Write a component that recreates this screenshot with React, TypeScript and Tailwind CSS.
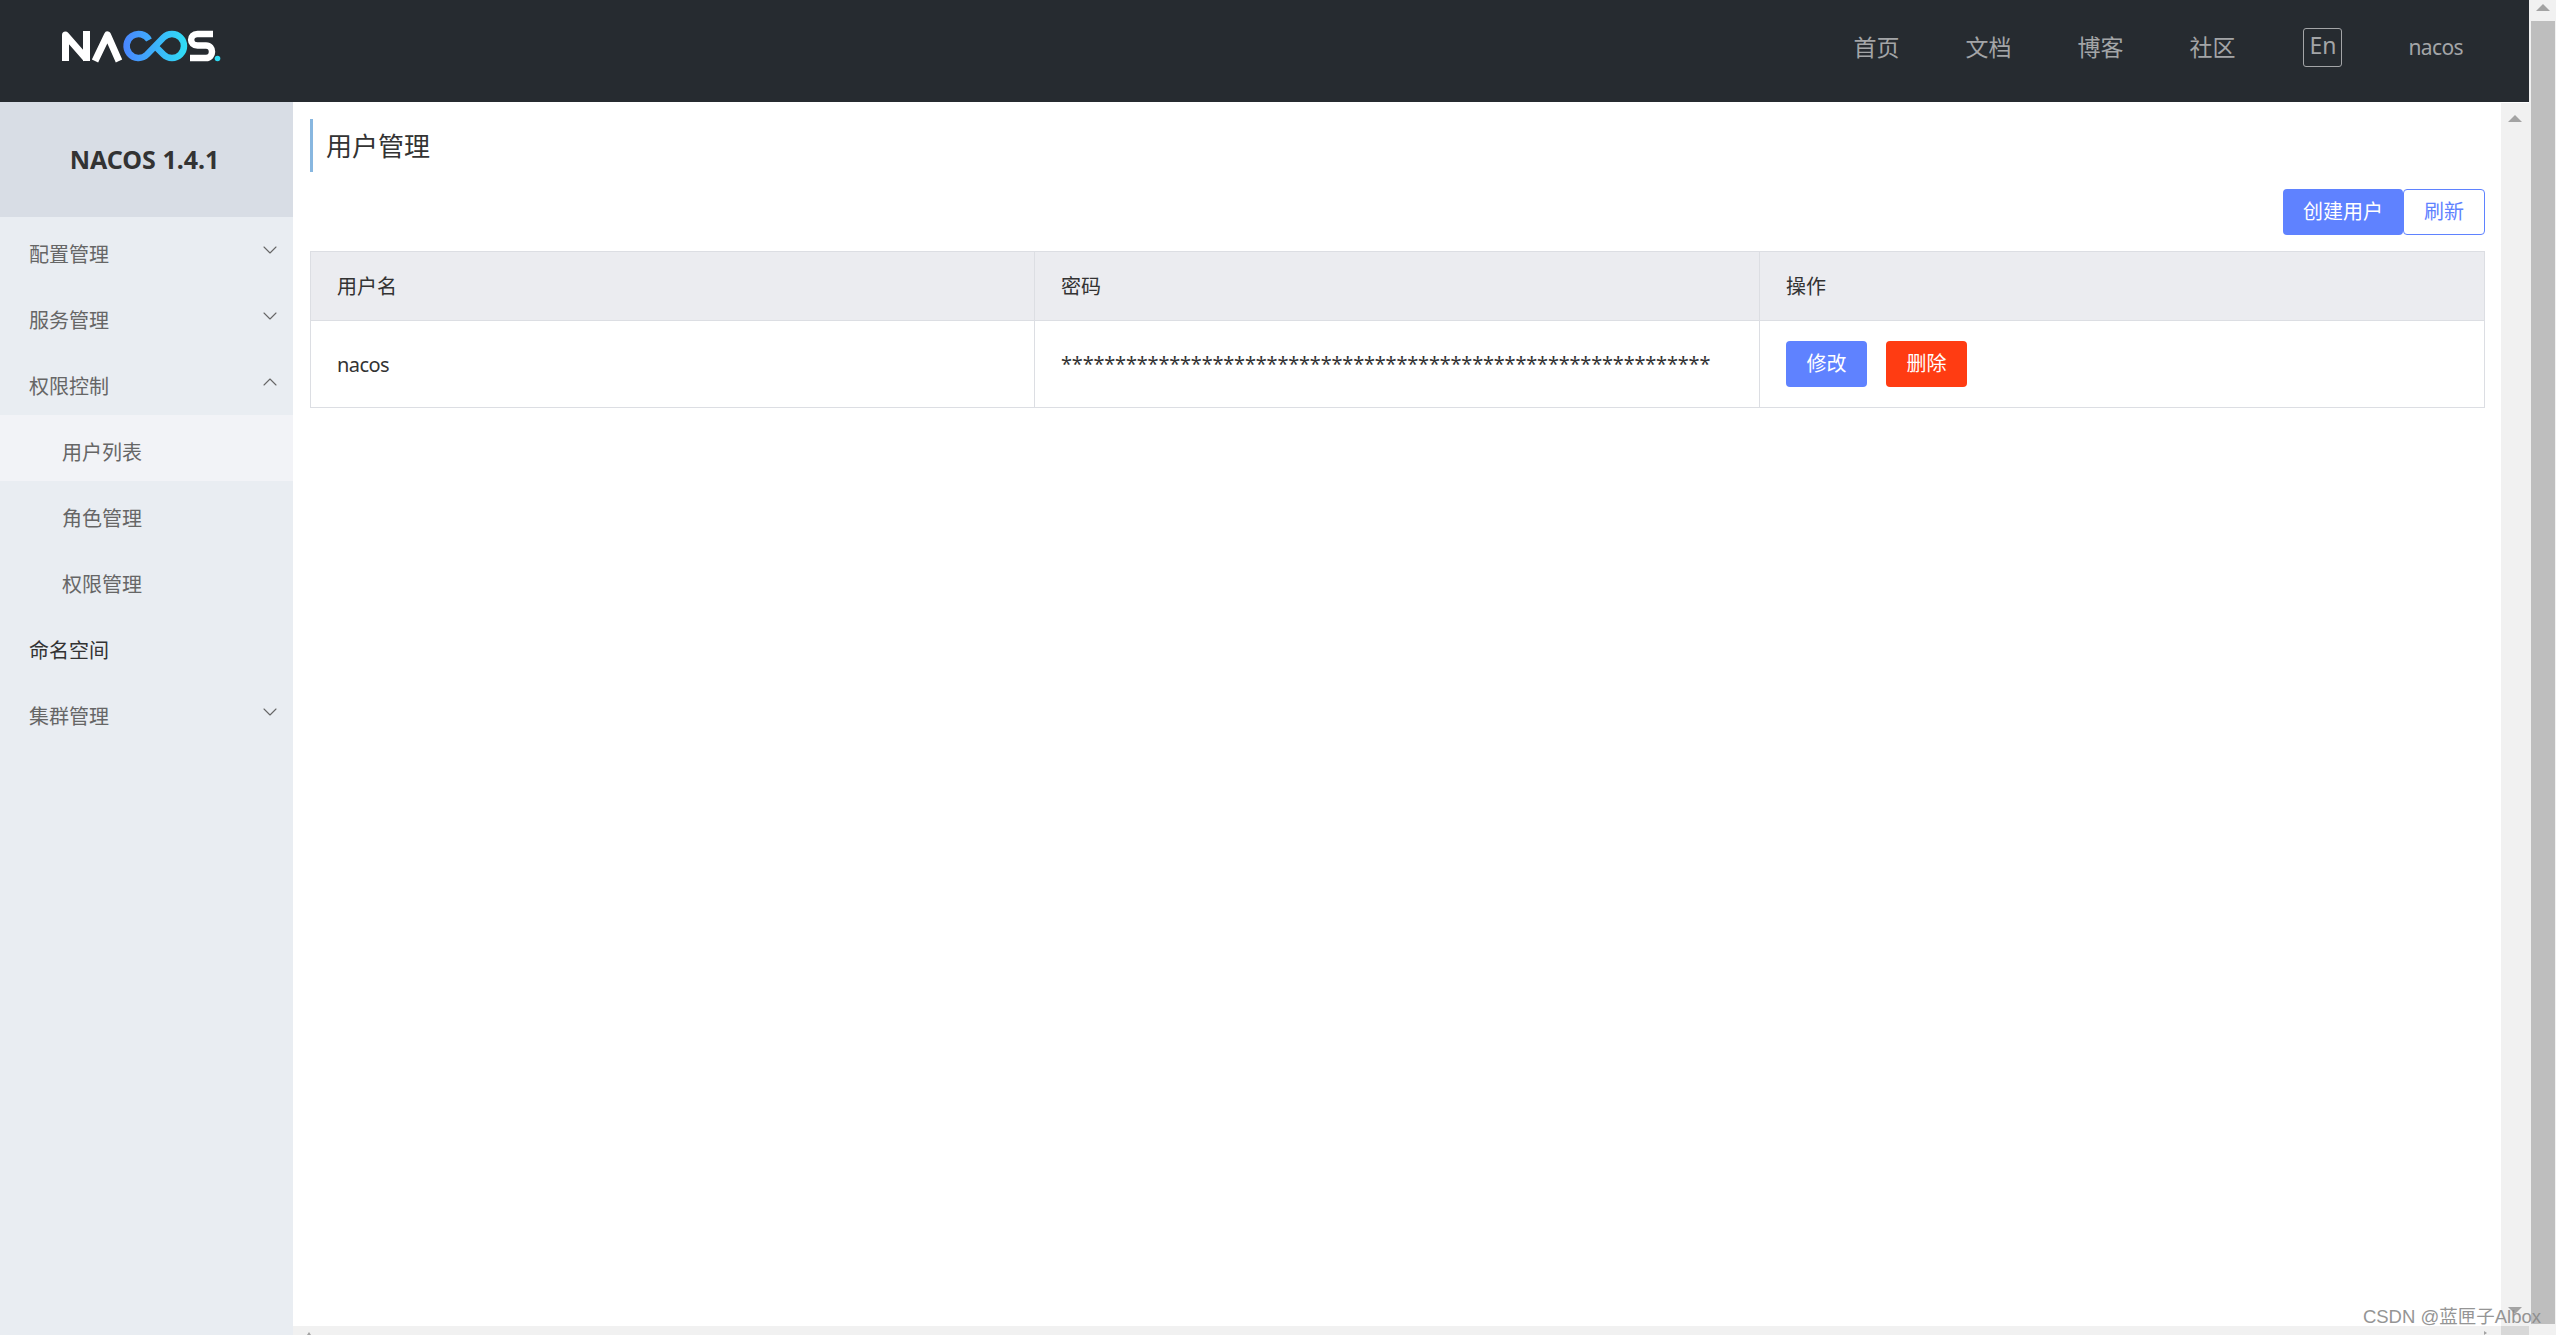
import { ChevronDown, ChevronUp } from 'lucide-react'

const font = { fontFamily: '"Noto Sans", "Noto Sans CJK SC", sans-serif' }

function Logo() {
  return (
    <svg width="170" height="40" viewBox="60 25 170 40" fill="none" className="block">
      <defs>
        <linearGradient id="inf" x1="123" y1="0" x2="188" y2="0" gradientUnits="userSpaceOnUse">
          <stop offset="0" stopColor="#4a85ff" />
          <stop offset="1" stopColor="#2fe0f5" />
        </linearGradient>
      </defs>
      <path d="M65.5 60V34L86.5 58" stroke="#fff" strokeWidth="7" strokeLinejoin="round" />
      <path d="M86.5 60V30" stroke="#fff" strokeWidth="7" />
      <path d="M95 60L107.5 34L119 60" stroke="#fff" strokeWidth="7" strokeLinejoin="round" />
      <path
        d="M149 39A12 12 0 1 0 147 53.5L163.5 36.5A12 12 0 1 1 163.5 53.5L157 47"
        stroke="url(#inf)"
        strokeWidth="6.5"
      />
      <path
        d="M213 33H197.5C189 33 189 44.5 197.5 44.5H206C214 44.5 214 57 206 57H190"
        stroke="#fff"
        strokeWidth="6.5"
      />
      <circle cx="217.5" cy="57.5" r="2.8" fill="#30dcf5" />
    </svg>
  )
}

function MenuItem({
  title,
  open,
  sub,
  active,
  dark,
  arrow,
}: {
  title: string
  open?: boolean
  sub?: boolean
  active?: boolean
  dark?: boolean
  arrow?: boolean
}) {
  return (
    <div
      className={`relative flex h-[66px] items-center pt-[10px] text-[20px] ${sub ? 'pl-[62px]' : 'pl-[29px]'} ${
        active ? 'bg-[#f2f3f7]' : ''
      } ${dark ? 'text-[#333333]' : 'text-[#666666]'}`}
    >
      {title}
      {arrow && (
        <span className="absolute right-[11px] top-[21px] text-[#666666]">
          {open ? <ChevronUp size={24} strokeWidth={1.1} /> : <ChevronDown size={24} strokeWidth={1.1} />}
        </span>
      )}
    </div>
  )
}

function UpArrow() {
  return <div className="h-0 w-0 border-x-[7px] border-b-[7px] border-x-transparent border-b-[#a3a3a3]" />
}

function DownArrow() {
  return <div className="h-0 w-0 border-x-[7px] border-t-[7px] border-x-transparent border-t-[#a3a3a3]" />
}

export default function App() {
  return (
    <div className="relative flex h-screen w-full overflow-hidden bg-white text-[#333333]" style={font}>
      <div className="flex h-full w-[2529px] flex-col">
        <header className="flex h-[102px] shrink-0 items-center justify-between bg-[#262b30] pl-[60px] pr-[66px] text-[#a3a5a7]">
          <div className="-mt-[10px]">
            <Logo />
          </div>
          <nav className="-mt-[8px] flex items-center text-[23px]">
            <span className="mr-[66px]">首页</span>
            <span className="mr-[66px]">文档</span>
            <span className="mr-[66px]">博客</span>
            <span className="mr-[68px]">社区</span>
            <span className="mr-[66px] flex h-[39px] w-[39px] items-start justify-center rounded-[3px] border border-[#a3a5a7] text-[23px] leading-[32px]">
              En
            </span>
            <span className="mt-[1px] text-[21px] tracking-[-0.6px]">nacos</span>
          </nav>
        </header>

        <div className="flex min-h-0 flex-1">
          <aside className="w-[293px] shrink-0 bg-[#e9edf2]">
            <div className="flex h-[115px] items-center justify-center bg-[#d8dde5] pr-[4px] text-[25px] font-bold text-[#333333]">
              NACOS 1.4.1
            </div>
            <MenuItem title="配置管理" arrow />
            <MenuItem title="服务管理" arrow />
            <MenuItem title="权限控制" arrow open />
            <MenuItem title="用户列表" sub active />
            <MenuItem title="角色管理" sub />
            <MenuItem title="权限管理" sub />
            <MenuItem title="命名空间" dark />
            <MenuItem title="集群管理" arrow />
          </aside>

          <div className="flex min-w-0 flex-1 flex-col">
            <div className="flex min-h-0 flex-1">
              <main className="min-w-0 flex-1 pl-[17px] pr-[16px] pt-[17px]">
                <h1 className="flex h-[53px] items-center border-l-[3px] border-[#88b7e0] pl-[13px] pt-[1px] text-[26px] font-normal text-[#333333]">
                  用户管理
                </h1>
                <div className="mt-[17px] flex justify-end">
                  <button
                    type="button"
                    className="h-[46px] w-[120px] rounded-[4px] bg-[#5f82ff] text-[20px] text-white"
                  >
                    创建用户
                  </button>
                  <button
                    type="button"
                    className="h-[46px] w-[82px] rounded-[4px] border border-[#5f82ff] bg-white text-[20px] text-[#5f82ff]"
                  >
                    刷新
                  </button>
                </div>
                <table className="mt-[16px] w-full table-fixed border-collapse border border-[#dcdee3] text-[20px]">
                  <colgroup>
                    <col className="w-[724px]" />
                    <col className="w-[725px]" />
                    <col />
                  </colgroup>
                  <thead>
                    <tr className="h-[69px] bg-[#ebecf0]">
                      <th className="border border-[#dcdee3] pl-[26px] pt-[2px] text-left font-normal">用户名</th>
                      <th className="border border-[#dcdee3] pl-[26px] pt-[2px] text-left font-normal">密码</th>
                      <th className="border border-[#dcdee3] pl-[26px] pt-[2px] text-left font-normal">操作</th>
                    </tr>
                  </thead>
                  <tbody>
                    <tr className="h-[87px]">
                      <td className="border border-[#dcdee3] pl-[26px] pt-[2px] tracking-[-0.6px]">nacos</td>
                      <td className="border border-[#dcdee3] pl-[26px]">
                        <span className="tracking-[-0.2px]">{'*'.repeat(60)}</span>
                      </td>
                      <td className="border border-[#dcdee3] pl-[26px]">
                        <div className="flex gap-[19px]">
                          <button
                            type="button"
                            className="h-[46px] w-[81px] rounded-[4px] bg-[#5f82ff] text-[20px] text-white"
                          >
                            修改
                          </button>
                          <button
                            type="button"
                            className="h-[46px] w-[81px] rounded-[4px] bg-[#ff3c12] text-[20px] text-white"
                          >
                            删除
                          </button>
                        </div>
                      </td>
                    </tr>
                  </tbody>
                </table>
              </main>
              <div className="mt-px flex w-[28px] shrink-0 flex-col items-center justify-between bg-[#f1f1f1] pb-[12px] pt-[12px]">
                <UpArrow />
                <DownArrow />
              </div>
            </div>
            <div className="flex h-[9px] shrink-0 items-end bg-[#f1f1f1]">
              <div className="ml-[14px] h-0 w-0 border-x-[2px] border-b-[3px] border-x-transparent border-b-[#a3a3a3]" />
              <div className="ml-auto mr-[14px] h-0 w-0 border-y-[2px] border-l-[3px] border-y-transparent border-l-[#a3a3a3]" />
              <div className="h-full w-[28px] bg-[#d8d8d8]" />
            </div>
          </div>
        </div>
      </div>

      <div className="flex w-[27px] shrink-0 flex-col items-center bg-[#f1f1f1] pt-[4px]">
        <UpArrow />
        <div className="ml-px mt-[10px] h-[1303px] w-[24px] bg-[#bebebe]" />
      </div>

      <div
        className="absolute bottom-[7px] right-[15px] text-[18.5px] leading-[22px] text-[#8a8a8a] opacity-90"
        style={{ fontFamily: '"Liberation Sans", "Noto Sans CJK SC", sans-serif' }}
      >
        CSDN @蓝匣子Albox
      </div>
    </div>
  )
}
